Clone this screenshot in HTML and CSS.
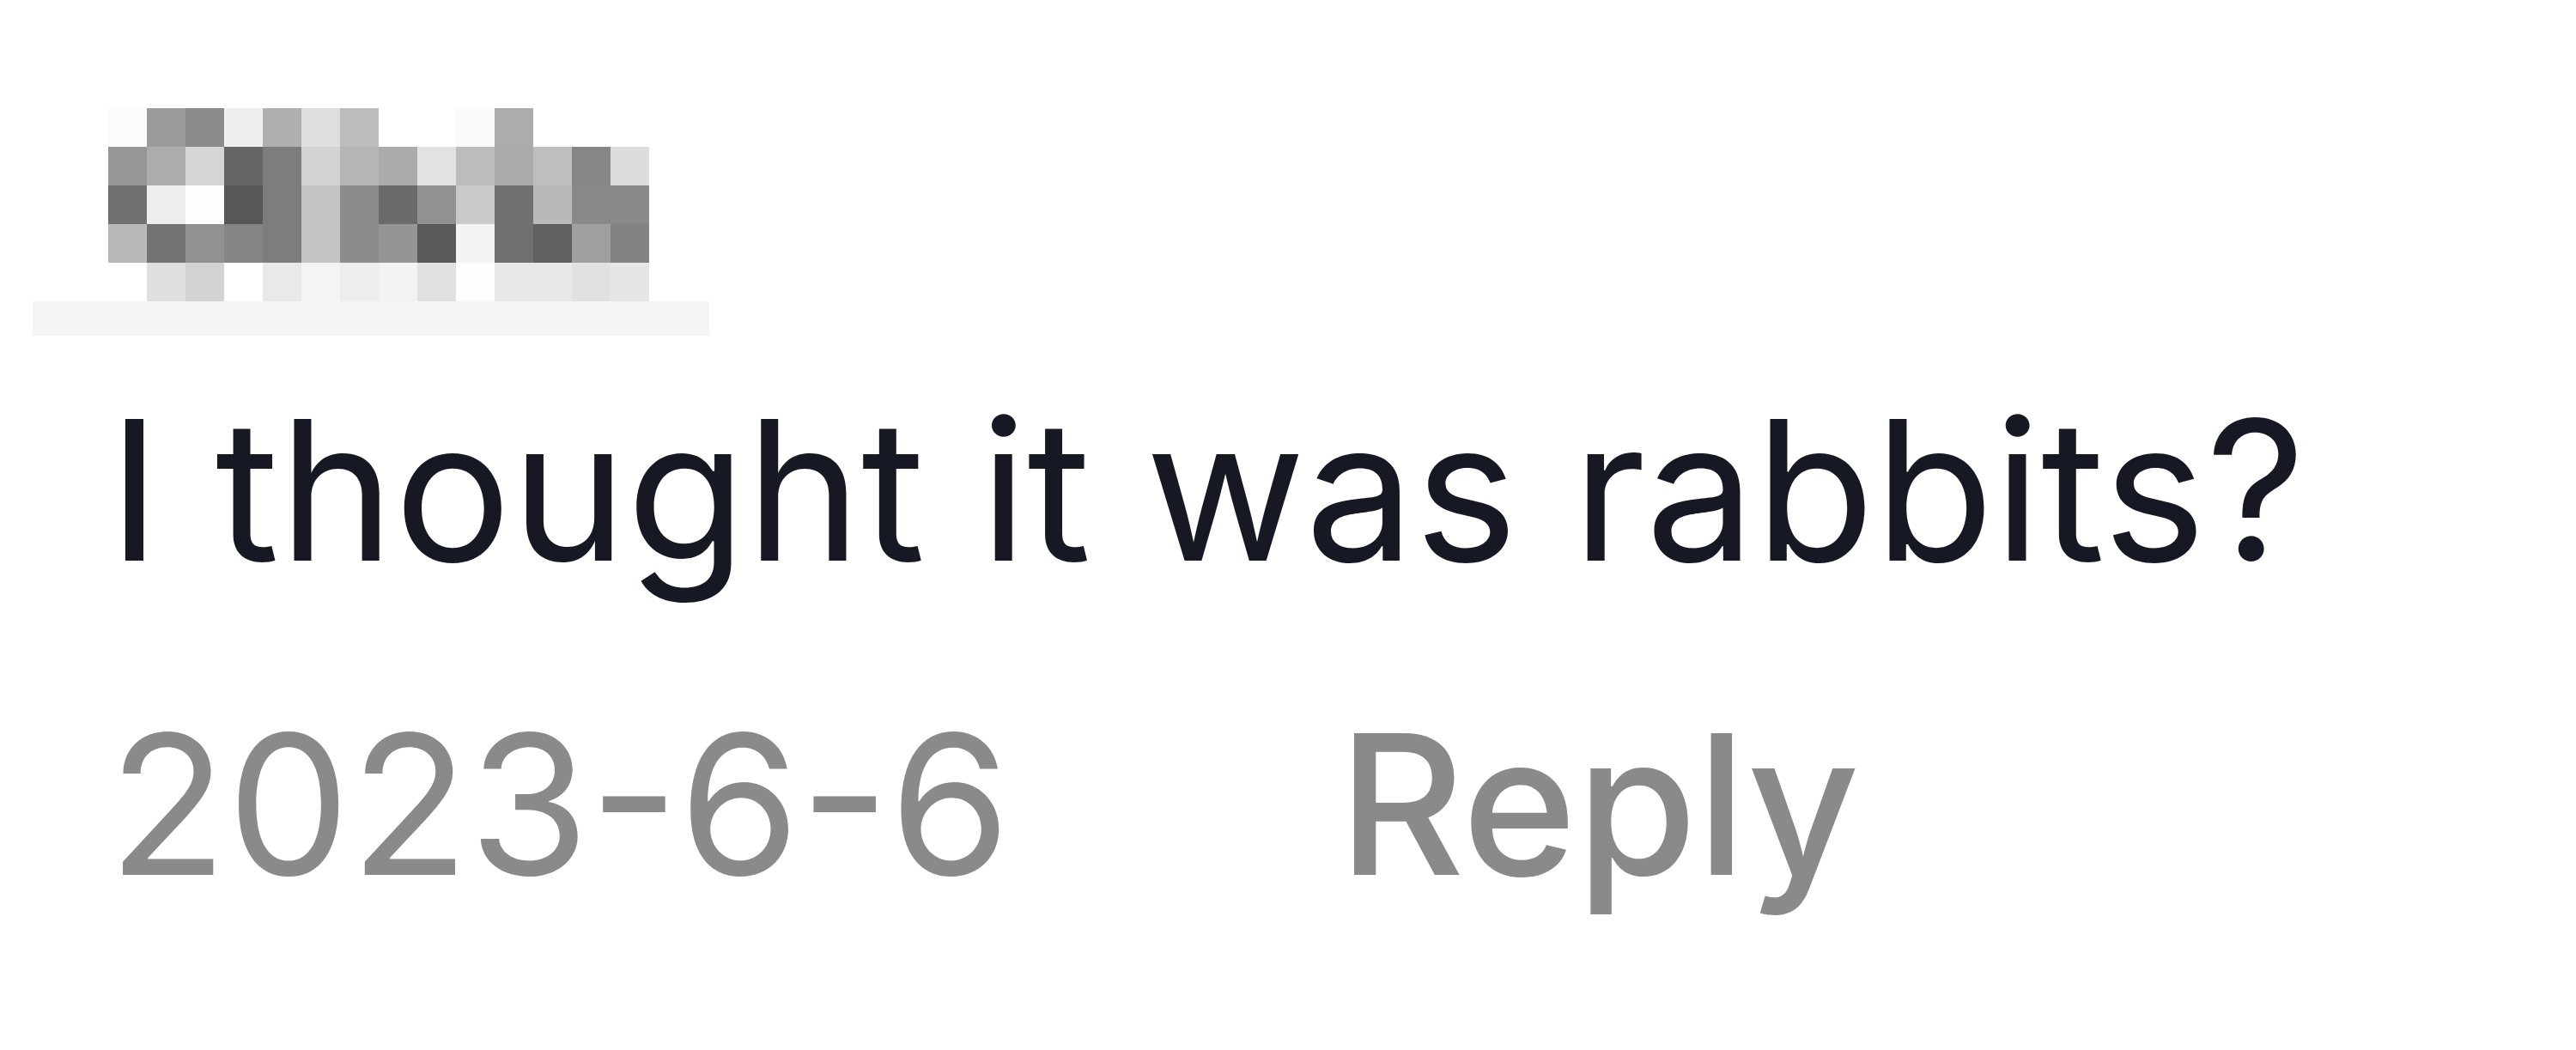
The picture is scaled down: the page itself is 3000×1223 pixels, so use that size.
FILE: index.html
```html
<!DOCTYPE html>
<html lang="en">

<head>
    <meta charset="UTF-8">
    <meta name="viewport" content="width=device-width, initial-scale=1.0">
    <title>Comment</title>
    <link rel="stylesheet" href="styles.css">
</head>

<body>
    <div class="comment">
        <!-- nome do autor pixelado -->
        <div class="author">
            <svg class="author-blur" viewBox="0 0 14 5" shape-rendering="crispEdges" aria-hidden="true">
                <rect x="0" y="0" width="1" height="1" fill="#fbfbfb" />
                <rect x="1" y="0" width="1" height="1" fill="#9b9b9b" />
                <rect x="2" y="0" width="1" height="1" fill="#8c8c8c" />
                <rect x="3" y="0" width="1" height="1" fill="#efefef" />
                <rect x="4" y="0" width="1" height="1" fill="#afafaf" />
                <rect x="5" y="0" width="1" height="1" fill="#dedede" />
                <rect x="6" y="0" width="1" height="1" fill="#bcbcbc" />
                <rect x="9" y="0" width="1" height="1" fill="#fafafa" />
                <rect x="10" y="0" width="1" height="1" fill="#acacac" />

                <rect x="0" y="1" width="1" height="1" fill="#979797" />
                <rect x="1" y="1" width="1" height="1" fill="#acacac" />
                <rect x="2" y="1" width="1" height="1" fill="#d6d6d6" />
                <rect x="3" y="1" width="1" height="1" fill="#666666" />
                <rect x="4" y="1" width="1" height="1" fill="#7d7d7d" />
                <rect x="5" y="1" width="1" height="1" fill="#d3d3d3" />
                <rect x="6" y="1" width="1" height="1" fill="#b5b5b5" />
                <rect x="7" y="1" width="1" height="1" fill="#ababab" />
                <rect x="8" y="1" width="1" height="1" fill="#e2e2e2" />
                <rect x="9" y="1" width="1" height="1" fill="#bdbdbd" />
                <rect x="10" y="1" width="1" height="1" fill="#ababab" />
                <rect x="11" y="1" width="1" height="1" fill="#bebebe" />
                <rect x="12" y="1" width="1" height="1" fill="#868686" />
                <rect x="13" y="1" width="1" height="1" fill="#dddddd" />

                <rect x="0" y="2" width="1" height="1" fill="#707070" />
                <rect x="1" y="2" width="1" height="1" fill="#ededed" />
                <rect x="2" y="2" width="1" height="1" fill="#fdfdfd" />
                <rect x="3" y="2" width="1" height="1" fill="#575757" />
                <rect x="4" y="2" width="1" height="1" fill="#7d7d7d" />
                <rect x="5" y="2" width="1" height="1" fill="#c4c4c4" />
                <rect x="6" y="2" width="1" height="1" fill="#8c8c8c" />
                <rect x="7" y="2" width="1" height="1" fill="#6a6a6a" />
                <rect x="8" y="2" width="1" height="1" fill="#919191" />
                <rect x="9" y="2" width="1" height="1" fill="#c9c9c9" />
                <rect x="10" y="2" width="1" height="1" fill="#707070" />
                <rect x="11" y="2" width="1" height="1" fill="#b9b9b9" />
                <rect x="12" y="2" width="1" height="1" fill="#898989" />
                <rect x="13" y="2" width="1" height="1" fill="#8a8a8a" />

                <rect x="0" y="3" width="1" height="1" fill="#b9b9b9" />
                <rect x="1" y="3" width="1" height="1" fill="#727272" />
                <rect x="2" y="3" width="1" height="1" fill="#919191" />
                <rect x="3" y="3" width="1" height="1" fill="#858585" />
                <rect x="4" y="3" width="1" height="1" fill="#7d7d7d" />
                <rect x="5" y="3" width="1" height="1" fill="#c4c4c4" />
                <rect x="6" y="3" width="1" height="1" fill="#8c8c8c" />
                <rect x="7" y="3" width="1" height="1" fill="#959595" />
                <rect x="8" y="3" width="1" height="1" fill="#5a5a5a" />
                <rect x="9" y="3" width="1" height="1" fill="#f3f3f3" />
                <rect x="10" y="3" width="1" height="1" fill="#707070" />
                <rect x="11" y="3" width="1" height="1" fill="#606060" />
                <rect x="12" y="3" width="1" height="1" fill="#a0a0a0" />
                <rect x="13" y="3" width="1" height="1" fill="#838383" />

                <rect x="1" y="4" width="1" height="1" fill="#dfdfdf" />
                <rect x="2" y="4" width="1" height="1" fill="#d3d3d3" />
                <rect x="4" y="4" width="1" height="1" fill="#e9e9e9" />
                <rect x="5" y="4" width="1" height="1" fill="#f4f4f4" />
                <rect x="6" y="4" width="1" height="1" fill="#ededed" />
                <rect x="7" y="4" width="1" height="1" fill="#f3f3f3" />
                <rect x="8" y="4" width="1" height="1" fill="#e1e1e1" />
                <rect x="9" y="4" width="1" height="1" fill="#fdfdfd" />
                <rect x="10" y="4" width="1" height="1" fill="#e8e8e8" />
                <rect x="11" y="4" width="1" height="1" fill="#e8e8e8" />
                <rect x="12" y="4" width="1" height="1" fill="#e1e1e1" />
                <rect x="13" y="4" width="1" height="1" fill="#e6e6e6" />
            </svg>
            <div class="author-strip"></div>
        </div>

        <p class="comment-text">I thought it was rabbits?</p>

        <div class="comment-meta">
            <span class="comment-date">2023-6-6</span>
            <span class="comment-reply">Reply</span>
        </div>
    </div>
</body>

</html>
```

FILE: styles.css
```css
body {
    font-family: Inter, "Noto Sans", sans-serif;
    margin: 0;
    background-color: #fff;
}

.comment {
    padding: 126px 0 0 126px;
}

.author {
    display: flex;
    flex-direction: column;
}

.author-blur {
    display: block;
    width: 630px;
    height: 225px;
}

.author-strip {
    width: 788px;
    height: 40px;
    margin-left: -88px;
    background-color: #f5f5f5;
}

.comment-text {
    margin: 42px 0 0;
    font-size: 227px;
    line-height: 276px;
    color: #161823;
}

.comment-meta {
    display: flex;
    gap: 382px;
    margin-top: 90px;
    font-size: 227px;
    line-height: 276px;
    color: #8a8a8a;
}

.comment-reply {
    font-weight: 550;
}
```
